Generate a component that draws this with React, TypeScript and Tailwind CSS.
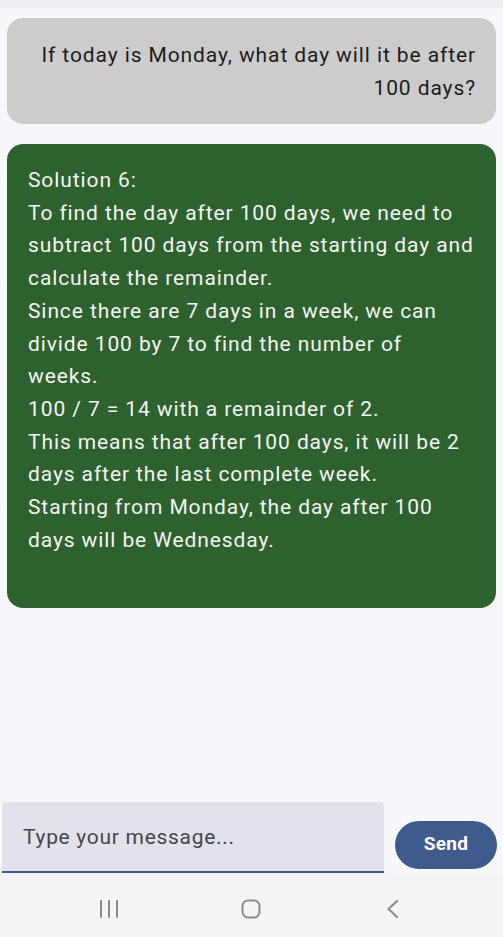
const lines = [
  "Solution 6:",
  "To find the day after 100 days, we need to subtract 100 days from the starting day and calculate the remainder.",
  "Since there are 7 days in a week, we can divide 100 by 7 to find the number of weeks.",
  "100 / 7 = 14 with a remainder of 2.",
  "This means that after 100 days, it will be 2 days after the last complete week.",
  "Starting from Monday, the day after 100 days will be Wednesday.",
];

export default function App() {
  return (
    <div className="flex h-[937px] w-[503px] flex-col bg-[#f8f7fb] font-['Roboto',sans-serif]">
      <div className="h-[8px] bg-[#efeff1]" />

      <div className="flex flex-1 flex-col gap-[20px] px-[7px] pt-[10px]">
        <div className="rounded-[16px] bg-[#cccccc] pb-[19px] pl-[24px] pr-[20px] pt-[21px] text-right text-[21px] leading-[33px] tracking-[0.9px] text-[#1c1c1c]">
          If today is Monday, what day will it be after 100 days?
        </div>

        <div className="h-[464px] rounded-[16px] bg-[#2d622f] pl-[21px] pr-[19px] pt-[20px] text-[21px] leading-[32.7px] tracking-[0.9px] text-[#f4f4f4]">
          {lines.map((l, i) => (
            <p key={i}>{l}</p>
          ))}
        </div>
      </div>

      <div className="flex items-center gap-[11px] pl-[2px] pr-[6px]">
        <div className="flex h-[71px] w-[382px] items-center rounded-t-[4px] border-b-2 border-[#3c5a8a] bg-[#e1e2ea] pl-[21px] pt-[3px] text-[21px] tracking-[0.7px] text-[#49454f]">
          Type your message...
        </div>
        <button className="mt-[14px] h-[48px] flex-1 rounded-full bg-[#3f5b8d] text-[19px] font-bold tracking-[0.3px] text-white">
          Send
        </button>
      </div>

      <div className="flex h-[64px] items-center bg-[#f4f4f6] pl-[99px] pt-[7px]">
        <svg width="20" height="20" viewBox="0 0 20 20" fill="none" stroke="#8a8a8a" strokeWidth="2" strokeLinecap="round">
          <path d="M2 2v16M10 2v16M18 2v16" />
        </svg>
        <svg className="ml-[122px]" width="20" height="20" viewBox="0 0 20 20" fill="none" stroke="#8a8a8a" strokeWidth="2">
          <rect x="1.5" y="1.5" width="17" height="17" rx="5.5" />
        </svg>
        <svg className="ml-[126px]" width="11" height="20" viewBox="0 0 11 20" fill="none" stroke="#8a8a8a" strokeWidth="2" strokeLinecap="round" strokeLinejoin="round">
          <path d="M10 2L1.5 10l8.5 8" />
        </svg>
      </div>
    </div>
  );
}
